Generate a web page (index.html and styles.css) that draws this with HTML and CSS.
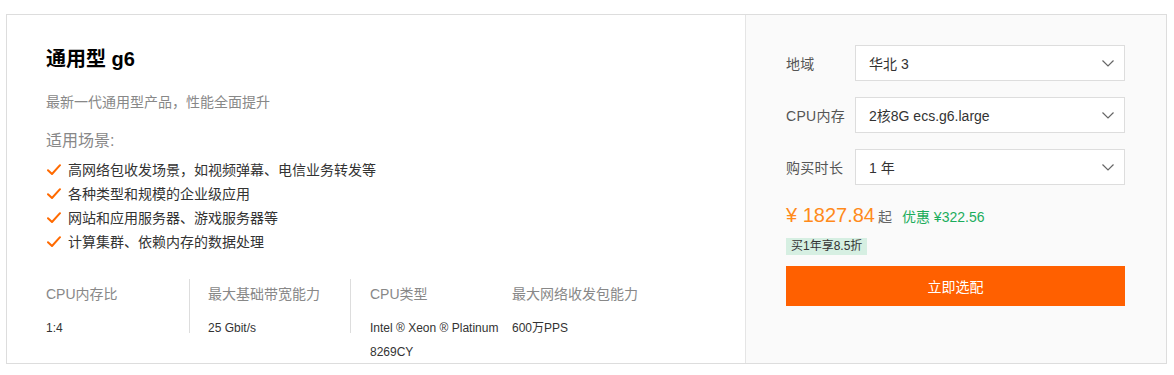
FILE: index.html
```html
<!DOCTYPE html>
<html lang="zh">
<head>
<meta charset="utf-8">
<title>通用型 g6</title>
<link rel="stylesheet" href="styles.css">
</head>
<body>
<div class="card">
  <section class="info">
    <h1 class="title">通用型 g6</h1>
    <p class="subtitle">最新一代通用型产品，性能全面提升</p>
    <h2 class="scene-title">适用场景:</h2>
    <ul class="scene-list">
      <li><svg class="check" width="14" height="12" viewBox="0 0 14 12"><path d="M1 6.2 L5 10 L13 1.2" fill="none" stroke="#ff6a00" stroke-width="2" stroke-linecap="round" stroke-linejoin="round"/></svg>高网络包收发场景，如视频弹幕、电信业务转发等</li>
      <li><svg class="check" width="14" height="12" viewBox="0 0 14 12"><path d="M1 6.2 L5 10 L13 1.2" fill="none" stroke="#ff6a00" stroke-width="2" stroke-linecap="round" stroke-linejoin="round"/></svg>各种类型和规模的企业级应用</li>
      <li><svg class="check" width="14" height="12" viewBox="0 0 14 12"><path d="M1 6.2 L5 10 L13 1.2" fill="none" stroke="#ff6a00" stroke-width="2" stroke-linecap="round" stroke-linejoin="round"/></svg>网站和应用服务器、游戏服务器等</li>
      <li><svg class="check" width="14" height="12" viewBox="0 0 14 12"><path d="M1 6.2 L5 10 L13 1.2" fill="none" stroke="#ff6a00" stroke-width="2" stroke-linecap="round" stroke-linejoin="round"/></svg>计算集群、依赖内存的数据处理</li>
    </ul>
    <div class="specs">
      <div class="spec spec-first">
        <div class="spec-label">CPU内存比</div>
        <div class="spec-value">1:4</div>
      </div>
      <div class="spec spec-mid">
        <div class="spec-label">最大基础带宽能力</div>
        <div class="spec-value">25 Gbit/s</div>
      </div>
      <div class="spec spec-plain">
        <div class="spec-label">CPU类型</div>
        <div class="spec-value">Intel ® Xeon ® Platinum 8269CY</div>
      </div>
      <div class="spec spec-last">
        <div class="spec-label">最大网络收发包能力</div>
        <div class="spec-value">600万PPS</div>
      </div>
    </div>
  </section>
  <section class="buy">
    <div class="form-row">
      <span class="form-label">地域</span>
      <div class="select"><span>华北 3</span><svg width="12" height="7" viewBox="0 0 12 7"><polyline points="0.5,0.5 6,6 11.5,0.5" fill="none" stroke="#666" stroke-width="1.2"/></svg></div>
    </div>
    <div class="form-row">
      <span class="form-label">CPU内存</span>
      <div class="select"><span>2核8G ecs.g6.large</span><svg width="12" height="7" viewBox="0 0 12 7"><polyline points="0.5,0.5 6,6 11.5,0.5" fill="none" stroke="#666" stroke-width="1.2"/></svg></div>
    </div>
    <div class="form-row">
      <span class="form-label">购买时长</span>
      <div class="select"><span>1 年</span><svg width="12" height="7" viewBox="0 0 12 7"><polyline points="0.5,0.5 6,6 11.5,0.5" fill="none" stroke="#666" stroke-width="1.2"/></svg></div>
    </div>
    <div class="price-row">
      <span class="price">¥ 1827.84</span>
      <span class="price-from">起</span>
      <span class="discount">优惠 ¥322.56</span>
    </div>
    <div class="tag">买1年享8.5折</div>
    <button class="buy-btn">立即选配</button>
  </section>
</div>
</body>
</html>
```

FILE: styles.css
```css
* {
  box-sizing: border-box;
}

body {
  margin: 0;
  padding: 14px 0 0 6px;
  font-family: "Liberation Sans", "Noto Sans CJK SC", sans-serif;
  color: #333;
  background: #fff;
}

.card {
  display: flex;
  width: 1161px;
  height: 350px;
  border: 1px solid #ddd;
  overflow: hidden;
}

.info {
  width: 738px;
  padding: 31px 0 0 39px;
}

.title {
  margin: 0;
  font-size: 20px;
  line-height: 26px;
  font-weight: bold;
  color: #000;
}

.subtitle {
  margin: 20px 0 0;
  font-size: 14px;
  line-height: 20px;
  color: #888;
}

.scene-title {
  margin: 18px 0 0;
  font-size: 16px;
  line-height: 22px;
  font-weight: normal;
  color: #888;
}

.scene-list {
  margin: 6px 0 0;
  padding: 0;
  list-style: none;
}

.scene-list li {
  display: flex;
  align-items: center;
  font-size: 14px;
  line-height: 24px;
  color: #333;
}

.check {
  margin: 0 7px 0 1px;
  flex: none;
}

.specs {
  display: flex;
  margin-top: 25px;
}

.spec {
  height: 54px;
  padding-top: 5px;
}

.spec-first {
  width: 144px;
  border-right: 1px solid #ddd;
}

.spec-mid {
  width: 161px;
  padding-left: 18px;
  border-right: 1px solid #ddd;
}

.spec-plain {
  width: 161px;
  padding-left: 19px;
}

.spec-last {
  width: 170px;
}

.spec-label {
  font-size: 14px;
  line-height: 20px;
  color: #888;
  white-space: nowrap;
}

.spec-value {
  margin-top: 12px;
  font-size: 12px;
  line-height: 24px;
  color: #333;
}

.buy {
  flex: 1;
  background: #fafafa;
  border-left: 1px solid #e5e5e5;
  padding: 30px 0 0 40px;
}

.form-row {
  display: flex;
  align-items: center;
  margin-bottom: 16px;
}

.form-label {
  width: 69px;
  font-size: 14px;
  color: #555;
  letter-spacing: 0.3px;
}

.select {
  display: flex;
  align-items: center;
  justify-content: space-between;
  width: 270px;
  height: 36px;
  padding: 0 10px 0 13px;
  background: #fff;
  border: 1px solid #ddd;
  font-size: 14px;
  color: #333;
}

.price-row {
  display: flex;
  align-items: baseline;
  margin-top: 2px;
  line-height: 28px;
}

.price {
  font-size: 20px;
  color: #ff8a1a;
}

.price-from {
  margin-left: 3px;
  font-size: 14px;
  color: #666;
}

.discount {
  margin-left: 10px;
  font-size: 14px;
  color: #1cad5c;
}

.tag {
  display: inline-block;
  margin-top: 7px;
  padding: 0 5px;
  height: 17px;
  line-height: 17px;
  font-size: 12px;
  color: #333;
  background: #d6efe2;
}

.buy-btn {
  display: block;
  margin-top: 11px;
  width: 339px;
  height: 40px;
  border: 0;
  background: #ff6000;
  color: #fff;
  font-family: inherit;
  font-size: 14px;
  cursor: pointer;
}
```
